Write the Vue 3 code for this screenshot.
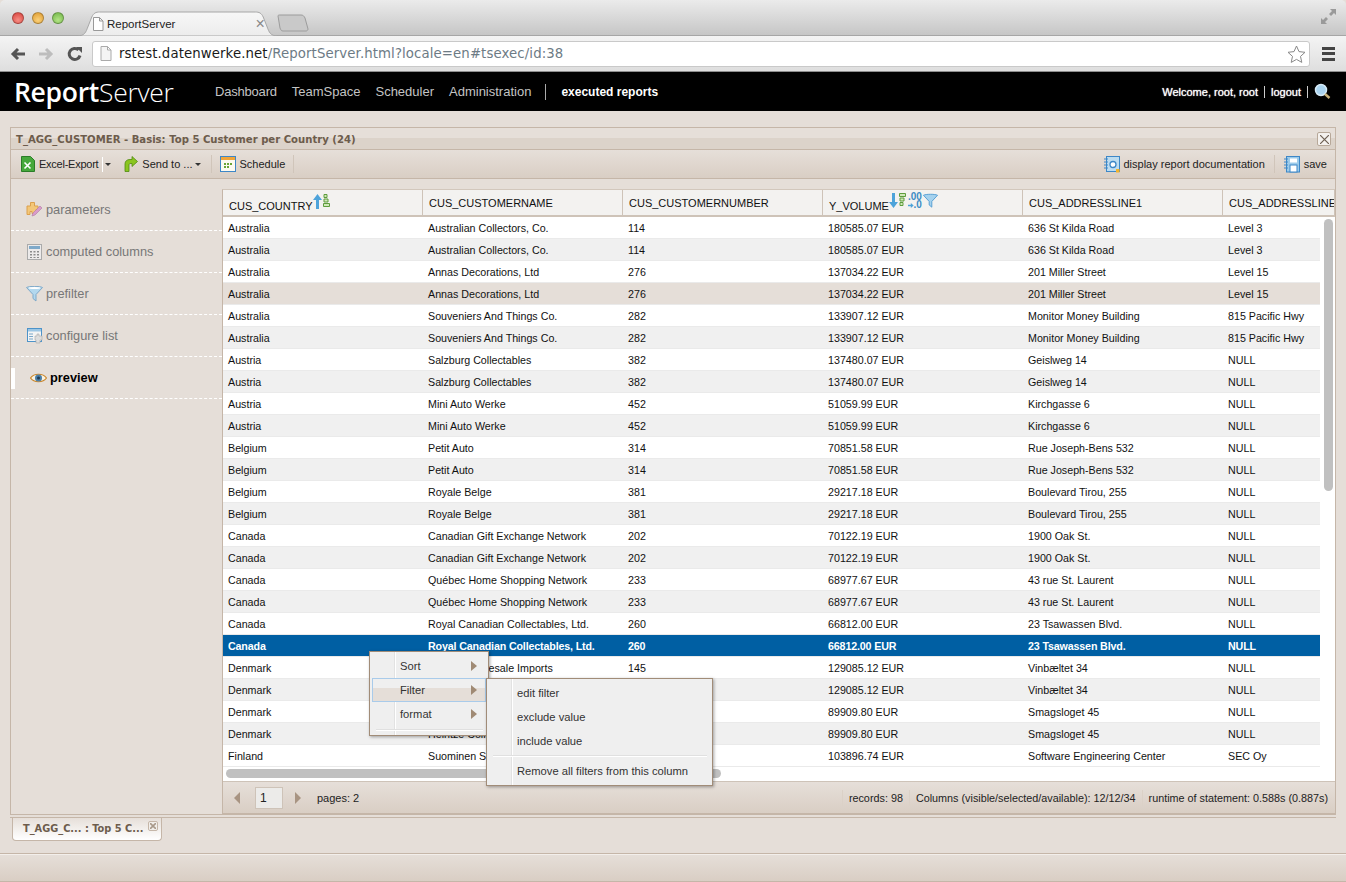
<template>
  <div class="page">
    <!-- browser frame -->
    <div class="tabstrip">
      <div class="lights">
        <span class="light red"></span>
        <span class="light amber"></span>
        <span class="light green"></span>
      </div>
      <div class="btab">
        <svg class="btab-shape" viewBox="0 0 204 25" preserveAspectRatio="none">
          <path d="M0 25C8 25 9 21 11 16L15 6C17 2 19 1 23 1H181C185 1 187 2 189 6L193 16C195 21 196 25 204 25Z" fill="url(#tabfill)" stroke="#a6a6a6" />
          <defs>
            <linearGradient id="tabfill" x1="0" y1="0" x2="0" y2="1">
              <stop offset="0" stop-color="#f7f7f7" />
              <stop offset="1" stop-color="#ececec" />
            </linearGradient>
          </defs>
        </svg>
        <svg class="pageicon" width="12" height="14" viewBox="0 0 12 14">
          <path d="M1.500.5h6l3.500 3.500v9.500H1.500z M7.500.5V4H11" fill="#fff" stroke="#999" />
        </svg>
        <span class="btab-title">ReportServer</span>
        <span class="btab-x">×</span>
      </div>
      <svg class="newtab" width="32" height="18" viewBox="0 0 32 18">
        <path d="M1 2C1 1 2 1 3 1H24C26 1 27 2 28 4L31 15C31 16 30 17 29 17H6C4 17 4 16 3 14Z" fill="#c9c9c9" stroke="#9c9c9c" />
      </svg>
      <svg class="fullscreen" width="15" height="15" viewBox="0 0 15 15">
        <path d="M15 0H9l2 2-3 3 2 2 3-3 2 2zM0 15h6l-2-2 3-3-2-2-3 3-2-2z" fill="#9a9a9a" />
      </svg>
    </div>
    <div class="urlbar">
      <svg width="16" height="14" viewBox="0 0 16 14">
        <path d="M15 7H3M8 2L3 7l5 5" fill="none" stroke="#555" stroke-width="3" />
      </svg>
      <svg class="fwd" width="16" height="14" viewBox="0 0 16 14">
        <path d="M1 7h12M8 2l5 5-5 5" fill="none" stroke="#bdbdbd" stroke-width="3" />
      </svg>
      <svg class="reload" width="16" height="16" viewBox="0 0 16 16">
        <path d="M13 9.500A5.500 5.500 0 1 1 11.500 4" fill="none" stroke="#555" stroke-width="3" />
        <path d="M9 1l6 0 0 6z" fill="#555" />
      </svg>
      <div class="omnibox">
        <svg class="pageicon2" width="12" height="15" viewBox="0 0 12 15">
          <path d="M1 .5h6.500L11 4v10.500H1z M7.500.5V4H11" fill="#f4f4f4" stroke="#aaa" />
        </svg>
        <span class="host">rstest.datenwerke.net</span><span class="urlpath">/ReportServer.html?locale=en#tsexec/id:38</span>
        <svg class="star" width="19" height="18" viewBox="0 0 19 18">
          <path d="M9.500 1l2.500 5.600 6 .7-4.500 4.100 1.300 6-5.300-3-5.300 3 1.300-6L1 7.300l6-.7z" fill="#fff" stroke="#888" />
        </svg>
      </div>
      <div class="burger"><i></i><i></i><i></i></div>
    </div>

    <!-- app header -->
    <header class="apphead">
      <div class="logo"><b>Report</b>Server</div>
      <nav class="mainnav">
        <a v-for="n in nav" :key="n">{{ n }}</a>
      </nav>
      <span class="navsep"></span>
      <span class="module">executed reports</span>
      <div class="userbox">
        <span>Welcome, root, root</span>
        <i></i>
        <span>logout</span>
        <i></i>
        <svg width="17" height="17" viewBox="0 0 17 17">
          <circle cx="7" cy="7" r="5.500" fill="#a9d3ef" stroke="#d5e9f6" stroke-width="1.500" />
          <path d="M11 11l4.500 4" stroke="#c9b27a" stroke-width="2.500" />
        </svg>
      </div>
    </header>

    <main class="workspace">
      <section class="win">
        <div class="win-title">
          <span>T_AGG_CUSTOMER - Basis: Top 5 Customer per Country (24)</span>
          <span class="win-close">
            <svg width="9" height="9" viewBox="0 0 9 9">
              <path d="M0 0l9 9M9 0L0 9" stroke="#6d5f52" stroke-width="1.200" />
            </svg>
          </span>
        </div>

        <div class="win-tools">
          <svg class="tool-ic" width="14" height="16" viewBox="0 0 14 16">
            <path d="M.5.500h9l4 4v11H.5z" fill="#46a83c" stroke="#2b7d28" />
            <path d="M3.500 6.500l6 6M9.500 6.500l-6 6" stroke="#fff" stroke-width="1.600" />
          </svg>
          <span class="tool-txt tight">Excel-Export</span>
          <span class="tool-split"></span>
          <span class="caret"></span>
          <svg class="tool-ic send" width="15" height="16" viewBox="0 0 15 16">
            <path d="M2 15.500V8C2 5 4 3.500 7 3.500h2V.500l5.500 5-5.500 5v-3H8C6.500 7.500 6 8 6 9v6.500z" fill="#8bc51f" stroke="#4f8a10" stroke-width=".8" />
          </svg>
          <span class="tool-txt">Send to ...</span>
          <span class="caret caret2"></span>
          <span class="tool-sep sep-a"></span>
          <svg class="tool-ic sched" width="16" height="16" viewBox="0 0 16 16">
            <rect x=".5" y=".5" width="15" height="15" fill="#fdfaf0" stroke="#3d87c7" />
            <rect x="1" y="1" width="14" height="3" fill="#f0a53a" />
            <path d="M4 7h2v2H4zM7 7h2v2H7zM10 7h2v2h-2zM4 10h2v2H4zM7 10h2v2H7z" fill="#6aa536" />
          </svg>
          <span class="tool-txt">Schedule</span>
          <span class="tool-sep sep-b"></span>
          <span class="spacer"></span>
          <svg class="tool-ic" width="16" height="17" viewBox="0 0 16 17">
            <rect x="2.500" y=".5" width="13" height="15" fill="#bcdcf0" stroke="#3d87c7" />
            <path d="M0 3h4M0 6h4M0 9h4M0 12h4" stroke="#3d87c7" />
            <circle cx="9" cy="8.500" r="3" fill="#fff" stroke="#3d87c7" stroke-width="1.300" />
            <rect x="12" y="13" width="3.500" height="3.500" fill="#f2b32e" />
          </svg>
          <span class="tool-txt">display report documentation</span>
          <span class="tool-sep sep-c"></span>
          <svg class="tool-ic" width="16" height="17" viewBox="0 0 16 17">
            <rect x="2.500" y=".5" width="13" height="15.500" fill="#9ccbea" stroke="#3d87c7" />
            <path d="M0 3h4M0 6h4M0 9h4M0 12h4" stroke="#3d87c7" />
            <rect x="6" y="2.500" width="7" height="4" fill="#fff" />
            <rect x="6" y="9" width="7" height="7" fill="#fff" stroke="#3d87c7" />
          </svg>
          <span class="tool-txt">save</span>
        </div>

        <div class="win-body">
          <aside class="side">
            <div class="side-item">
              <svg width="17" height="17" viewBox="0 0 17 17">
                <path d="M1 5h3.500V1.500h4V5H12v3.500h-2v4H6v-2H4v3H1z" fill="#f3c779" stroke="#dca04d" />
                <path d="M7 12l7-7 2 2-7 7-3 1z" fill="#d99ccb" stroke="#b07aa5" stroke-width=".6" />
              </svg>
              <span>parameters</span>
            </div>
            <div class="side-item">
              <svg width="15" height="16" viewBox="0 0 15 16">
                <rect x=".5" y=".5" width="14" height="15" fill="#eceaea" stroke="#aaa" />
                <rect x="2" y="2" width="11" height="3" fill="#7fa9c9" />
                <path d="M3 7h2v1.500H3zM6.500 7h2v1.500h-2zM10 7h2v1.500h-2zM3 10h2v1.500H3zM6.500 10h2v1.500h-2zM10 10h2v1.500h-2zM3 13h2v1H3zM6.500 13h2v1h-2zM10 13h2v1h-2z" fill="#8c8c8c" />
              </svg>
              <span>computed columns</span>
            </div>
            <div class="side-item">
              <svg width="17" height="16" viewBox="0 0 17 16">
                <path d="M.5 1.500C3 0 14 0 16.500 1.500L10 8.500V15l-3-2.500v-4z" fill="#b3d8ee" stroke="#7fa9c9" />
                <ellipse cx="8.500" cy="2" rx="6" ry="1" fill="#fff" />
              </svg>
              <span>prefilter</span>
            </div>
            <div class="side-item">
              <svg width="16" height="16" viewBox="0 0 16 16">
                <rect x=".5" y=".5" width="14" height="13" fill="#f4f4f4" stroke="#4d93c9" />
                <rect x="1" y="1" width="13" height="2.500" fill="#9cc6e4" />
                <path d="M2 6h4M2 8.500h4M2 11h4" stroke="#7aa7c9" />
                <path d="M8 8h2V6h2v2h3v4h-2v3H9v-3H8z" fill="#ddd" stroke="#aaa" stroke-width=".6" />
              </svg>
              <span>configure list</span>
            </div>
            <div class="side-item active">
              <svg width="17" height="12" viewBox="0 0 17 12">
                <path d="M.5 6C4 1 13 1 16.500 6 13 11 4 11 .5 6z" fill="#f8f2e2" stroke="#c9852a" stroke-width="1.200" />
                <circle cx="8.500" cy="6" r="3.500" fill="#4a7ea8" />
                <circle cx="8.500" cy="6" r="1.500" fill="#1e3a52" />
              </svg>
              <span>preview</span>
            </div>
          </aside>

          <div class="grid">
            <div class="grid-head">
              <div class="hcell low">
                CUS_COUNTRY
                <span class="hicons">
                  <svg width="9" height="15" viewBox="0 0 9 15"><path d="M3 15V6H0l4.500-6L9 6H6v9z" fill="#4da3da" /></svg>
                  <svg width="7" height="13" viewBox="0 0 7 13"><path d="M1 .5h3v3H1zM1 5h4v3H1zM.5 9.500h6v3h-6z" fill="#cfe8b8" stroke="#5e9c3c" /></svg>
                </span>
              </div>
              <div class="hcell">CUS_CUSTOMERNAME</div>
              <div class="hcell">CUS_CUSTOMERNUMBER</div>
              <div class="hcell low">
                Y_VOLUME
                <span class="hicons">
                  <svg width="9" height="15" viewBox="0 0 9 15"><path d="M3 0v9H0l4.500 6L9 9H6V0z" fill="#4da3da" /></svg>
                  <svg width="7" height="13" viewBox="0 0 7 13"><path d="M.5.500h6v3h-6zM1 5h4v3H1zM1 9.500h3v3H1z" fill="#cfe8b8" stroke="#5e9c3c" /></svg>
                  <span class="decimals"><em>.00</em><em><svg width="6" height="7" viewBox="0 0 8 7"><path d="M0 2.500h4V0l4 3.500L4 7V4.500H0z" fill="#4da3da" /></svg>.0</em></span>
                  <svg width="15" height="16" viewBox="0 0 17 16"><path d="M.5 1.500C3 0 14 0 16.500 1.500L10 8.500V15l-3-2.500v-4z" fill="#a5d2ee" stroke="#4d9ad0" /></svg>
                </span>
              </div>
              <div class="hcell">CUS_ADDRESSLINE1</div>
              <div class="hcell">CUS_ADDRESSLINE2</div>
            </div>

            <div class="grid-main">
              <div class="grid-rows">
                <div
                  v-for="(r, i) in rows"
                  :key="i"
                  class="row"
                  :class="{ odd: i % 2 === 1, hover: i === 3, selected: i === 19 }"
                >
                  <div v-for="(c, j) in r" :key="j" class="cell">{{ c }}</div>
                </div>
              </div>
              <div class="vscroll"><span class="vthumb"></span></div>
              <span class="hthumb"></span>
            </div>

            <div class="grid-foot">
              <span class="tri left"></span>
              <span class="pageinput">1</span>
              <span class="tri right"></span>
              <span class="pages">pages: 2</span>
              <span class="spacer"></span>
              <span class="fitem">records: 98</span>
              <span class="fitem">Columns (visible/selected/available): 12/12/34</span>
              <span class="fitem">runtime of statement: 0.588s (0.887s)</span>
            </div>

            <!-- context menu over the table -->
            <div class="menu menu-main">
              <div v-for="m in mainMenu" :key="m" class="mitem" :class="{ on: m === 'Filter' }">
                <span>{{ m }}</span>
                <span class="marrow"></span>
              </div>
              <div class="msep"></div>
            </div>
            <div class="menu menu-sub">
              <div v-for="m in subMenu" :key="m" class="mitem"><span>{{ m }}</span></div>
              <div class="msep"></div>
              <div class="mitem last"><span>Remove all filters from this column</span></div>
            </div>
          </div>
        </div>
      </section>

      <div class="tabbar">
        <div class="rtab">
          <span>T_AGG_C... : Top 5 C...</span>
          <span class="rtab-x">
            <svg width="6" height="6" viewBox="0 0 6 6"><path d="M0 0l6 6M6 0L0 6" stroke="#a99a8b" stroke-width="1.600" /></svg>
          </span>
        </div>
      </div>
    </main>

    <footer class="statusbar"></footer>
  </div>
</template>

<script setup>
const nav = ['Dashboard', 'TeamSpace', 'Scheduler', 'Administration']
const mainMenu = ['Sort', 'Filter', 'format']
const subMenu = ['edit filter', 'exclude value', 'include value']

const base = [
  ['Australia', 'Australian Collectors, Co.', '114', '180585.07 EUR', '636 St Kilda Road', 'Level 3'],
  ['Australia', 'Annas Decorations, Ltd', '276', '137034.22 EUR', '201 Miller Street', 'Level 15'],
  ['Australia', 'Souveniers And Things Co.', '282', '133907.12 EUR', 'Monitor Money Building', '815 Pacific Hwy'],
  ['Austria', 'Salzburg Collectables', '382', '137480.07 EUR', 'Geislweg 14', 'NULL'],
  ['Austria', 'Mini Auto Werke', '452', '51059.99 EUR', 'Kirchgasse 6', 'NULL'],
  ['Belgium', 'Petit Auto', '314', '70851.58 EUR', 'Rue Joseph-Bens 532', 'NULL'],
  ['Belgium', 'Royale Belge', '381', '29217.18 EUR', 'Boulevard Tirou, 255', 'NULL'],
  ['Canada', 'Canadian Gift Exchange Network', '202', '70122.19 EUR', '1900 Oak St.', 'NULL'],
  ['Canada', 'Québec Home Shopping Network', '233', '68977.67 EUR', '43 rue St. Laurent', 'NULL'],
  ['Canada', 'Royal Canadian Collectables, Ltd.', '260', '66812.00 EUR', '23 Tsawassen Blvd.', 'NULL'],
  ['Denmark', 'Danish Wholesale Imports', '145', '129085.12 EUR', 'Vinbæltet 34', 'NULL'],
  ['Denmark', 'Heintze Collectables', '227', '89909.80 EUR', 'Smagsloget 45', 'NULL']
]

// every customer shows up twice in this report
const rows = base.flatMap((r) => [r, r])
rows.push(['Finland', 'Suominen Souveniers', '334', '103896.74 EUR', 'Software Engineering Center', 'SEC Oy'])
</script>

<style>
body {
  margin: 0;
  overflow: hidden;
}
</style>

<style scoped>
* {
  box-sizing: border-box;
}

.page {
  width: 1346px;
  height: 882px;
  display: flex;
  flex-direction: column;
  overflow: hidden;
  background: #e5ded8;
  font-family: "Liberation Sans", Arial, sans-serif;
}

/* browser chrome */
.tabstrip {
  height: 36px;
  flex: none;
  display: flex;
  align-items: flex-end;
  background: linear-gradient(#ebebeb, #c6c6c6);
  border-bottom: 1px solid #a6a6a6;
  border-radius: 5px 5px 0 0;
}

.lights {
  display: flex;
  gap: 8px;
  align-self: flex-start;
  padding: 12px 0 0 12px;
}

.light {
  width: 12px;
  height: 12px;
  border-radius: 50%;
  border: 1px solid rgba(0, 0, 0, 0.25);
}

.red {
  background: radial-gradient(circle at 50% 70%, #f78e85, #d6403a);
}

.amber {
  background: radial-gradient(circle at 50% 70%, #fbd17a, #dd9a2e);
}

.green {
  background: radial-gradient(circle at 50% 70%, #b4e486, #6fb446);
}

.btab {
  position: relative;
  width: 201px;
  height: 25px;
  margin: 0 0 -1px 13px;
  display: flex;
  align-items: center;
  padding-left: 15px;
  font-size: 11.500px;
  color: #222;
}

.btab-shape {
  position: absolute;
  left: 0;
  top: 0;
  width: 100%;
  height: 100%;
}

.pageicon,
.btab-title,
.btab-x {
  position: relative;
  flex: none;
}

.btab-title {
  margin-left: 3px;
}

.btab-x {
  margin-left: 80px;
  font-size: 16px;
  color: #888;
  line-height: 1;
}

.newtab {
  margin: 0 0 3px -1px;
}

.fullscreen {
  margin: 0 10px 11px auto;
}

.urlbar {
  height: 36px;
  flex: none;
  display: flex;
  align-items: center;
  padding-left: 10px;
  background: linear-gradient(#f4f4f4, #dedede);
  border-bottom: 1px solid #8e8e8e;
}

.fwd {
  margin-left: 12px;
}

.reload {
  margin-left: 13px;
}

.omnibox {
  width: 1218px;
  height: 26px;
  margin-left: 9px;
  display: flex;
  align-items: center;
  padding-left: 7px;
  background: #fff;
  border: 1px solid #c9c9c9;
  border-radius: 3px;
  font-family: "DejaVu Sans", sans-serif;
  font-size: 13.300px;
  letter-spacing: 0.1px;
}

.pageicon2 {
  flex: none;
  margin-right: 7px;
}

.host {
  color: #1a1a1a;
}

.urlpath {
  color: #6d7b85;
}

.star {
  margin-left: auto;
  margin-right: 3px;
}

.burger {
  margin-left: 12px;
  display: flex;
  flex-direction: column;
  gap: 2.500px;
}

.burger i {
  display: block;
  width: 13px;
  height: 3px;
  background: #444;
}

/* app header */
.apphead {
  height: 39px;
  flex: none;
  display: flex;
  align-items: center;
  background: #000;
  color: #fff;
  padding-left: 14px;
}

.logo {
  width: 201px;
  font-family: "Open Sans", sans-serif;
  font-size: 26.500px;
  font-weight: 300;
  letter-spacing: -0.300px;
}

.logo b {
  font-weight: 600;
}

.mainnav {
  display: flex;
  gap: 15px;
  font-size: 13px;
  color: #c4c4c4;
}

.mainnav a:first-child {
  letter-spacing: -0.200px;
}

.navsep {
  width: 1px;
  height: 16px;
  margin: 0 15px 0 14px;
  background: #aaa;
}

.module {
  font-size: 12px;
  font-weight: 700;
}

.userbox {
  margin-left: auto;
  margin-right: 15px;
  display: flex;
  align-items: center;
  font-size: 11px;
  text-shadow: 0 0 1px #fff;
}

.userbox i {
  width: 1px;
  height: 12px;
  margin: 0 6px;
  background: #ccc;
}

/* window */
.workspace {
  flex: 1;
  padding: 16px 10px 0;
}

.win {
  width: 1326px;
  height: 687px;
  display: flex;
  flex-direction: column;
  border: 1px solid #c5b6a8;
  border-bottom: 0;
}

.win-title {
  height: 22px;
  flex: none;
  display: flex;
  align-items: center;
  justify-content: space-between;
  padding: 1px 4px 0 5px;
  background: linear-gradient(#e6dfd9 50%, #dcd3ca 50%);
  border-bottom: 1px solid #c5b6a8;
  font-family: "DejaVu Sans", sans-serif;
  font-size: 10.100px;
  font-weight: 700;
  color: #6d5c4c;
}

.win-close {
  width: 14px;
  height: 14px;
  display: flex;
  align-items: center;
  justify-content: center;
  background: #f4f1ee;
  border: 1px solid #b7a899;
  border-radius: 2px;
}

.win-tools {
  height: 29px;
  flex: none;
  display: flex;
  align-items: center;
  padding-left: 10px;
  padding-right: 8px;
  background: linear-gradient(#e6dfd9, #d9cec4);
  border-bottom: 1px solid #c5b6a8;
  font-size: 11px;
  color: #222;
}

.tool-txt {
  margin-left: 4px;
}

.tool-txt.tight {
  letter-spacing: -0.250px;
}

.tool-split {
  width: 1px;
  height: 15px;
  margin: 0 2px 0 4px;
  background: #fff;
}

.caret {
  width: 0;
  height: 0;
  border: 3px solid transparent;
  border-top: 3px solid #333;
  border-bottom: 0;
}

.caret2 {
  margin-left: 2px;
}

.send {
  margin-left: 12px;
}

.tool-sep {
  width: 1px;
  height: 18px;
  background: #d0c5ba;
}

.sep-a {
  margin: 0 8px 0 10px;
}

.sep-b {
  margin-left: 8px;
}

.sep-c {
  margin: 0 9px;
}

.spacer {
  flex: 1;
}

.win-body {
  flex: 1;
  min-height: 0;
  display: flex;
  padding-top: 10px;
}

/* left nav */
.side {
  width: 211px;
  flex: none;
  font-size: 12.800px;
  color: #777;
}

.side-item {
  position: relative;
  height: 42px;
  display: grid;
  grid-template-columns: 17px auto;
  justify-content: start;
  justify-items: center;
  align-items: center;
  column-gap: 3px;
  padding: 0 0 0 15px;
  border-bottom: 1px dashed #fff;
}

.side-item.active {
  padding-left: 19px;
  font-weight: 700;
  color: #000;
}

.side-item.active::before {
  content: "";
  position: absolute;
  left: 0;
  top: 11px;
  width: 4px;
  height: 21px;
  background: #fff;
}

/* grid */
.grid {
  position: relative;
  flex: 1;
  min-width: 0;
  display: flex;
  flex-direction: column;
  border-left: 1px solid #c5b6a8;
  border-top: 1px solid #d2c7bc;
  overflow: visible;
}

.grid-head {
  height: 27px;
  flex: none;
  display: grid;
  grid-template-columns: repeat(5, 200px) 1fr;
  overflow: hidden;
  background: #f3f2f0;
  border-bottom: 2px solid #cec3b8;
  font-size: 11px;
  color: #111;
}

.hcell {
  display: flex;
  align-items: center;
  padding: 1px 0 0 6px;
  white-space: nowrap;
  border-right: 1px solid #cec3b8;
  overflow: hidden;
}

.hcell.low {
  align-items: flex-end;
  padding-top: 0;
  padding-bottom: 3px;
}

.hicons {
  display: flex;
  align-items: flex-start;
  gap: 1px;
  align-self: center;
}

.decimals {
  width: 14px;
  display: flex;
  flex-direction: column;
  margin-left: 1px;
  font-size: 10px;
  font-weight: 700;
  line-height: 8px;
  color: #3c8cc4;
}

.decimals em {
  font-style: normal;
  display: flex;
  align-items: center;
  justify-content: flex-end;
}

.grid-main {
  position: relative;
  height: 565px;
  flex: none;
  display: flex;
  background: #fff;
  border-bottom: 1px solid #cec3b8;
}

.grid-rows {
  width: 1097px;
  overflow: hidden;
  font-size: 10.700px;
  color: #111;
}

.row {
  display: grid;
  grid-template-columns: repeat(6, 200px);
  height: 22px;
  align-items: center;
  background: #fff;
  border-bottom: 1px solid #eaeaea;
}

.row.odd {
  background: #f0f0f0;
}

.row.hover {
  background: #e5ded8;
}

.row.selected {
  background: #005fa3;
  color: #fff;
  font-weight: 700;
  letter-spacing: -0.150px;
}

.cell {
  padding-left: 5px;
  white-space: nowrap;
}

.vscroll {
  flex: 1;
  padding: 2px 0 0 4px;
}

.vthumb {
  display: block;
  width: 9px;
  height: 272px;
  border-radius: 5px;
  background: #c0c0c0;
}

.hthumb {
  position: absolute;
  left: 3px;
  bottom: 3px;
  width: 495px;
  height: 9px;
  border-radius: 5px;
  background: #c0c0c0;
}

.grid-foot {
  flex: 1;
  display: flex;
  align-items: center;
  padding-left: 11px;
  padding-right: 7px;
  background: linear-gradient(#e6dfd9, #d9cec4);
  border-bottom: 1px solid #c5b6a8;
  font-size: 10.800px;
  color: #222;
}

.tri {
  width: 0;
  height: 0;
  border: 6px solid transparent;
}

.tri.left {
  border-left: 0;
  border-right: 6px solid #a89482;
}

.tri.right {
  border-right: 0;
  border-left: 6px solid #a89482;
}

.pageinput {
  width: 28px;
  height: 22px;
  margin: 0 12px 0 15px;
  padding-left: 4px;
  line-height: 20px;
  font-size: 12px;
  background: #ecebe9;
  border: 1px solid #cec3b8;
}

.pages {
  margin-left: 16px;
  font-size: 11px;
}

.fitem {
  margin-left: 6px;
  padding-left: 6px;
  border-left: 1px solid #dbd1c7;
  line-height: 16px;
}

.fitem:first-of-type {
  border-left: 0;
}

/* context menus */
.menu {
  position: absolute;
  background: #efefef;
  border: 1px solid #a18c78;
  box-shadow: 1px 1px 3px rgba(0, 0, 0, 0.35);
  padding: 2px;
  font-size: 11.200px;
  color: #333;
}

.menu::before {
  content: "";
  position: absolute;
  top: 0;
  bottom: 0;
  left: 25px;
  width: 1px;
  background: #fff;
  box-shadow: -1px 0 0 #e2e2e2;
}

.menu-main {
  left: 146px;
  top: 461px;
  width: 120px;
  height: 85px;
}

.menu-sub {
  left: 263px;
  top: 488px;
  width: 227px;
  height: 108px;
  z-index: 2;
}

.menu-sub .msep {
  margin-top: 2px;
}

.mitem {
  position: relative;
  height: 24px;
  display: flex;
  align-items: center;
  justify-content: space-between;
  padding: 0 8px 0 27px;
  border: 1px solid transparent;
}

.mitem.on {
  background: linear-gradient(#efefef 40%, #e5ded8 40%);
  border-color: #a9cbea;
}

.marrow {
  width: 0;
  height: 0;
  border: 5px solid transparent;
  border-right: 0;
  border-left: 6px solid #a08a74;
}

.msep {
  position: relative;
  height: 2px;
  margin: 3px 3px 0 4px;
  background: #e0e0e0;
  border-bottom: 1px solid #fff;
}

.mitem.last {
  margin-top: 2px;
}

/* bottom tabs */
.tabbar {
  height: 39px;
  border-top: 4px double #c5b6a8;
  padding-left: 2px;
}

.rtab {
  width: 150px;
  height: 23px;
  display: flex;
  align-items: center;
  padding: 0 3px 2px 10px;
  background: linear-gradient(#e6dfd9, #fff);
  border: 1px solid #c5b6a8;
  border-top: 0;
  border-radius: 0 0 4px 4px;
  font-family: "DejaVu Sans", sans-serif;
  font-size: 9.800px;
  font-weight: 700;
  color: #6d5c4c;
  white-space: nowrap;
}

.rtab-x {
  width: 10px;
  height: 10px;
  margin: -4px 0 0 5px;
  display: flex;
  align-items: center;
  justify-content: center;
  background: #f1eeea;
  border: 1px solid #c5b6a8;
  border-radius: 2px;
}

.statusbar {
  height: 29px;
  flex: none;
  margin-bottom: 1px;
  background: linear-gradient(#e6dfd9, #d9cec4);
  border-top: 1px solid #c5b6a8;
  border-bottom: 1px solid #c5b6a8;
  box-shadow: inset 0 1px 0 #f3efeb;
}
</style>
